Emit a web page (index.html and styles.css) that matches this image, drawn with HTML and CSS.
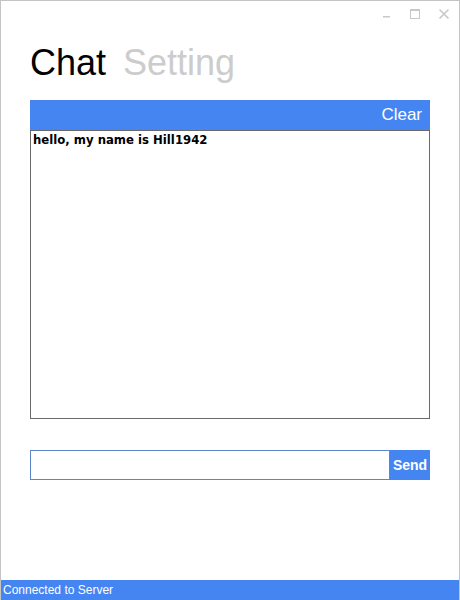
FILE: index.html
```html
<!DOCTYPE html>
<html>
<head>
<meta charset="utf-8">
<link rel="stylesheet" href="styles.css">
</head>
<body>
<div class="window">
  <div class="titlebar">
    <svg class="ctl" width="10" height="10" viewBox="0 0 10 10"><rect x="1" y="8" width="7" height="1.5" fill="#c8c8c8"/></svg>
    <svg class="ctl" width="12" height="12" viewBox="0 0 12 12"><rect x="1.5" y="1.5" width="9" height="9" fill="none" stroke="#c8c8c8" stroke-width="1"/><rect x="1" y="1" width="10" height="2" fill="#c8c8c8"/></svg>
    <svg class="ctl" width="12" height="12" viewBox="0 0 12 12"><path d="M1.5 1.5 L10.5 10.5 M10.5 1.5 L1.5 10.5" stroke="#c8c8c8" stroke-width="1.6"/></svg>
  </div>
  <div class="tabs">
    <span class="tab active">Chat</span>
    <span class="tab">Setting</span>
  </div>
  <div class="panel">
    <div class="panel-head"><span class="clear">Clear</span></div>
    <div class="messages">
      <div class="msg">hello, my name is Hill1942</div>
    </div>
  </div>
  <div class="composer">
    <div class="input"></div>
    <div class="send">Send</div>
  </div>
  <div class="spacer"></div>
  <div class="status">Connected to Server</div>
</div>
</body>
</html>
```

FILE: styles.css
```css
html, body {
  margin: 0;
  padding: 0;
  background: #fff;
}
.window {
  width: 460px;
  height: 600px;
  box-sizing: border-box;
  border: 1px solid #c4c4c4;
  border-bottom: none;
  display: flex;
  flex-direction: column;
  font-family: "Liberation Sans", Arial, sans-serif;
}
.titlebar {
  height: 30px;
  display: flex;
  justify-content: flex-end;
  align-items: flex-start;
  gap: 17px;
  padding: 7px 9px 0 0;
  box-sizing: border-box;
}
.ctl { display: block; }
.tabs {
  display: flex;
  gap: 17px;
  padding-left: 29px;
  height: 69px;
  box-sizing: border-box;
  padding-top: 9px;
}
.tab {
  font-size: 36px;
  line-height: 45px;
  color: #cccccc;
}
.tab.active { color: #000; }
.panel {
  margin: 0 29px;
  display: flex;
  flex-direction: column;
}
.panel-head {
  height: 30px;
  background: #4585f2;
  display: flex;
  justify-content: flex-end;
  align-items: center;
  padding-right: 8px;
}
.clear {
  color: #fff;
  font-size: 17px;
}
.messages {
  height: 289px;
  box-sizing: border-box;
  border: 1px solid #6a6a6a;
  padding: 2px 2px;
}
.msg {
  font-family: "DejaVu Sans", Verdana, sans-serif;
  font-weight: bold;
  font-size: 11.7px;
  line-height: 14px;
  color: #000;
}
.composer {
  margin: 31px 29px 0;
  display: flex;
  height: 30px;
}
.input {
  flex: 1;
  border: 1px solid #5b86c7;
}
.send {
  width: 40px;
  background: #4585f2;
  color: #fff;
  font-weight: bold;
  font-size: 14px;
  display: flex;
  align-items: center;
  justify-content: center;
}
.spacer { flex: 1; }
.status {
  height: 20px;
  background: #4585f2;
  color: #fff;
  font-size: 12px;
  line-height: 20px;
  padding-left: 2px;
}
```
